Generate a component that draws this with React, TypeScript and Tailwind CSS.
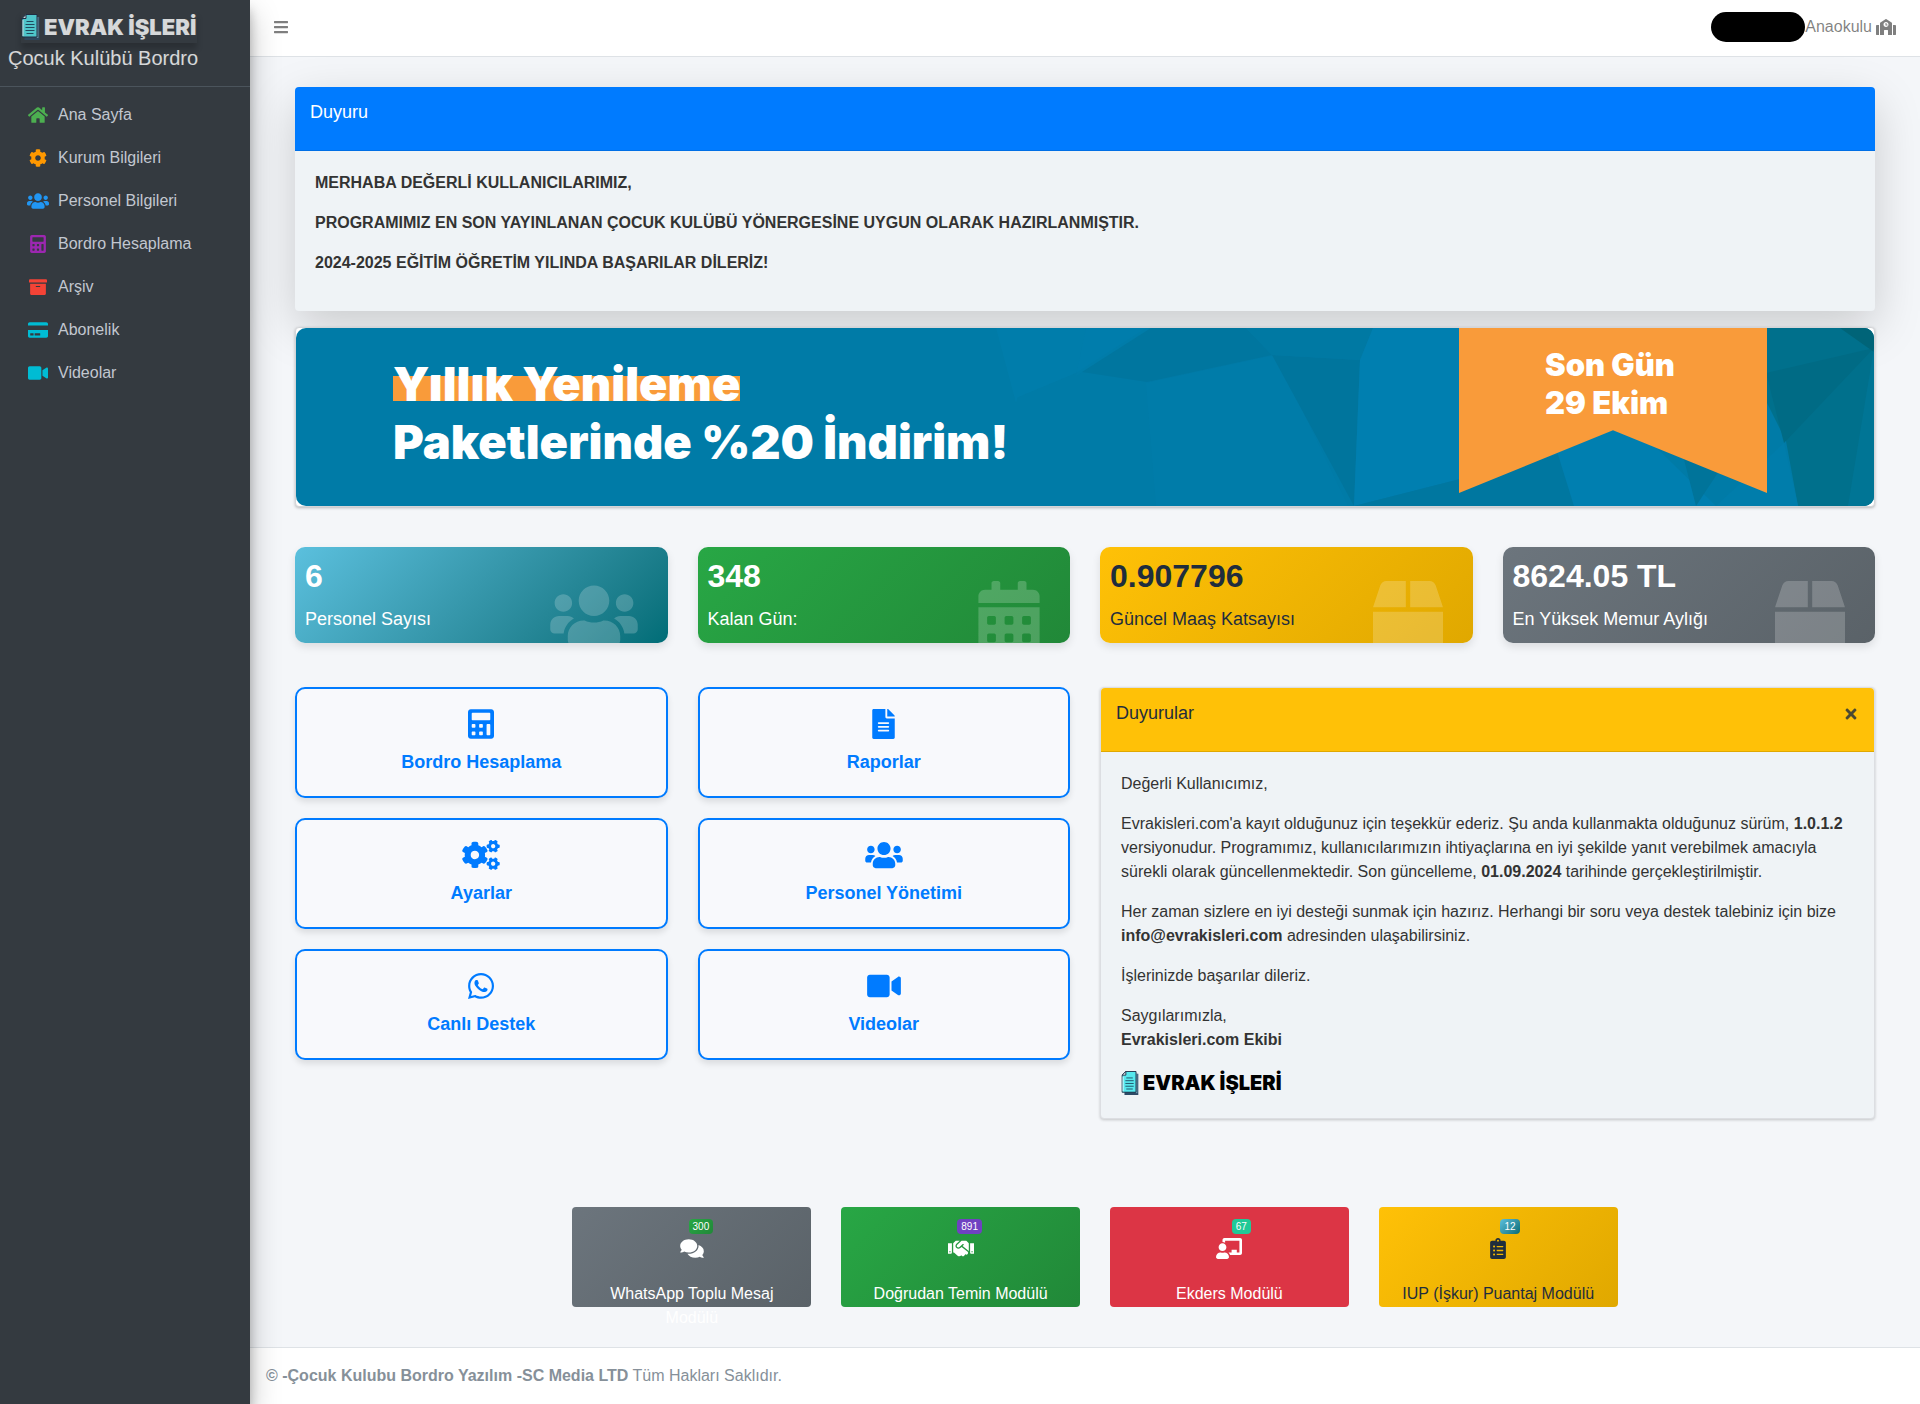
import { ReactNode } from "react"
import {
  FaArchive,
  FaBars,
  FaBox,
  FaCalculator,
  FaCalendarAlt,
  FaChalkboardTeacher,
  FaClipboardList,
  FaCog,
  FaCogs,
  FaComments,
  FaCreditCard,
  FaFileAlt,
  FaHandshake,
  FaHome,
  FaSchool,
  FaTimes,
  FaUsers,
  FaVideo,
  FaWhatsapp,
} from "react-icons/fa"

const menu = [
  { label: "Ana Sayfa", icon: <FaHome className="h-[18px] w-5" />, color: "text-[#4caf50]" },
  { label: "Kurum Bilgileri", icon: <FaCog className="h-[18px] w-[18px]" />, color: "text-[#ff9800]" },
  { label: "Personel Bilgileri", icon: <FaUsers className="h-[18px] w-[22px]" />, color: "text-[#2196f3]" },
  { label: "Bordro Hesaplama", icon: <FaCalculator className="h-[18px] w-4" />, color: "text-[#9c27b0]" },
  { label: "Arşiv", icon: <FaArchive className="h-[18px] w-[18px]" />, color: "text-[#f44336]" },
  { label: "Abonelik", icon: <FaCreditCard className="h-[18px] w-5" />, color: "text-[#00bcd4]" },
  { label: "Videolar", icon: <FaVideo className="h-[18px] w-5" />, color: "text-[#00bcd4]" },
]

const stats = [
  { value: "6", label: "Personel Sayısı", icon: <FaUsers className="h-[70px] w-[88px]" />, style: "text-white from-[#5bc0de] to-[#006d77]" },
  { value: "348", label: "Kalan Gün:", icon: <FaCalendarAlt className="h-[70px] w-[62px]" />, style: "text-white from-[#28a745] to-[#218838]" },
  { value: "0.907796", label: "Güncel Maaş Katsayısı", icon: <FaBox className="h-[70px] w-[70px]" />, style: "text-[#1f2d3d] from-[#ffc107] to-[#e0a800]" },
  { value: "8624.05 TL", label: "En Yüksek Memur Aylığı", icon: <FaBox className="h-[70px] w-[70px]" />, style: "text-white from-[#6c757d] to-[#5a6268]" },
]

const shortcuts = [
  { label: "Bordro Hesaplama", icon: <FaCalculator className="h-[30px] w-[26px]" /> },
  { label: "Raporlar", icon: <FaFileAlt className="h-[30px] w-[23px]" /> },
  { label: "Ayarlar", icon: <FaCogs className="h-[30px] w-[38px]" /> },
  { label: "Personel Yönetimi", icon: <FaUsers className="h-[30px] w-[38px]" /> },
  { label: "Canlı Destek", icon: <FaWhatsapp className="h-[30px] w-[26px]" /> },
  { label: "Videolar", icon: <FaVideo className="h-[30px] w-[34px]" /> },
]

const modules = [
  {
    label: "WhatsApp Toplu Mesaj Modülü",
    count: 300,
    icon: <FaComments className="h-[21px] w-6 shrink-0" />,
    style: "text-white bg-linear-135 from-[#6c757d] to-[#5a6268]",
    badge: "bg-linear-135 from-[#28a745] to-[#218838]",
  },
  {
    label: "Doğrudan Temin Modülü",
    count: 891,
    icon: <FaHandshake className="h-[21px] w-[26px] shrink-0" />,
    style: "text-white bg-linear-135 from-[#28a745] to-[#218838]",
    badge: "bg-[#6f42c1]",
  },
  {
    label: "Ekders Modülü",
    count: 67,
    icon: <FaChalkboardTeacher className="h-[21px] w-[26px] shrink-0" />,
    style: "text-white bg-[#dc3545]",
    badge: "bg-[#20c997]",
  },
  {
    label: "IUP (İşkur) Puantaj Modülü",
    count: 12,
    icon: <FaClipboardList className="h-[21px] w-4 shrink-0" />,
    style: "text-[#1f2d3d] bg-linear-135 from-[#ffc107] to-[#e0a800]",
    badge: "bg-linear-135 from-[#5bc0de] to-[#006d77]",
  },
]

function DocumentIcon({ className }: { className: string }) {
  return (
    <svg viewBox="0 0 18 26" className={className} aria-hidden="true">
      <path d="M3 3h15v23H3z" fill="#2d4a66" />
      <path d="M15 3h2v21h-2z" fill="#6f9fb4" />
      <path d="M4.500 .5h11v22.500h-15V4.500z" fill="#56e8ee" stroke="#1d2b44" />
      <path d="M.5 4.500h4v-4z" fill="#f2fbff" stroke="#1d2b44" />
      <path d="M1.500 6v16" stroke="#e6fbff" />
      <path d="M5 7.500h7M4 10.500h9M4 13.500h9M4 16.500h9M5 19.500h7" stroke="#1d4f66" />
    </svg>
  )
}

function Card({ children, className }: { children: ReactNode, className: string }) {
  return <section className={`rounded bg-[#eff3f6] ${className}`}>{children}</section>
}

function Sidebar() {
  return (
    <aside className="relative z-10 w-[250px] shrink-0 bg-[#343a40] shadow-[0_14px_28px_rgba(0,0,0,0.25),0_10px_10px_rgba(0,0,0,0.22)]">
      <a href="#" className="block h-[87px] border-b border-[#4b545c] px-2 pt-[11px] text-white/80">
        <span className="ml-[13px] flex h-8 w-fit items-center gap-1 pr-px shadow-[0_6px_6px_rgba(0,0,0,0.2)]">
          <DocumentIcon className="h-[26px] w-[19px] opacity-80" />
          <span className="font-[Inter] text-[22px] font-black">EVRAK İŞLERİ</span>
        </span>
        <span className="block text-xl leading-[30px]">Çocuk Kulübü Bordro</span>
      </a>
      <nav className="flex flex-col gap-[3px] pt-2">
        {menu.map((item) => (
          <a key={item.label} href="#" className="flex h-10 items-center gap-[7px] pl-[25px] text-[#c2c7d0]">
            <span className={`flex w-[26px] justify-center ${item.color}`}>{item.icon}</span>
            {item.label}
          </a>
        ))}
      </nav>
    </aside>
  )
}

function Banner() {
  return (
    <div className="mt-4 rounded border border-[#d3d5d8] bg-white shadow-[0_1px_3px_rgba(0,0,0,0.25)]">
      <div className="relative flex h-[178px] justify-between overflow-hidden rounded-[10px] bg-[#007ba7] text-white">
        <svg viewBox="0 0 1578 178" preserveAspectRatio="none" className="absolute size-full" aria-hidden="true">
          <path d="M700 0h40l-20 75zM740 0h110l-70 45-60 25z" fill="#007eae" opacity=".6" />
          <path d="M790 0h65L780 48zM850 55L980 27l72 151H860z" fill="#007faf" opacity=".35" />
          <path d="M855 0h95l26 27-125 27-65-10z" fill="#00769f" />
          <path d="M976 27l88 5-6 146z" fill="#00759d" />
          <path d="M950 0h127l-13 32-88-5z" fill="#0079a3" />
          <path d="M1077 0h91v150l-110 28 6-146z" fill="#007fb0" />
          <path d="M1058 178l110-28 100-25 12 53z" fill="#0077a0" />
          <path d="M1260 120l70-30 90 88h-142z" fill="#007fb0" />
          <path d="M1385 120l40 20-25 38z" fill="#00749a" />
          <path d="M1470 0h108v178h-76l-12-65-20-40z" fill="#00708c" />
          <path d="M1470 45L1578 20l-90 95z" fill="#006b85" />
          <path d="M1544 0h34v24z" fill="#006478" />
          <path d="M1578 20v158h-26z" fill="#007595" />
          <path d="M1488 115l-68 63h82z" fill="#007dab" />
        </svg>
        <div className="relative pt-[27px] pl-[97px] font-[Inter] text-[47px] leading-[58px] font-black">
          <p className="relative w-fit">
            <span className="absolute top-[21px] h-[25px] w-full bg-[#f99b3a]" />
            <span className="relative">Yıllık Yenileme</span>
          </p>
          <p>Paketlerinde %20 İndirim!</p>
        </div>
        <p className="relative mr-[107px] h-[165px] w-[308px] bg-[#f99b3a] pt-[18px] pl-[86px] font-[Inter] text-[31px] leading-[38px] font-black [clip-path:polygon(0_0,100%_0,100%_100%,50%_62%,0_100%)]">
          Son Gün
          <br />
          29 Ekim
        </p>
      </div>
    </div>
  )
}

export default function App() {
  return (
    <div className="flex min-h-screen bg-[#f4f6f9] font-['Liberation_Sans',Arial,sans-serif] text-base text-[#212529]">
      <Sidebar />
      <div className="flex min-w-0 flex-1 flex-col">
        <header className="flex h-[57px] items-center justify-between border-b border-[#dee2e6] bg-white px-6 text-black/50">
          <button type="button" aria-label="Menü" className="pb-[3px]">
            <FaBars className="h-4 w-[14px]" />
          </button>
          <a href="#" className="flex items-center pb-[3px]">
            <span className="h-[30px] w-[94px] rounded-full bg-black" />
            Anaokulu
            <FaSchool className="ml-1 h-4 w-5" />
          </a>
        </header>

        <main className="flex-1 px-[45px] pt-[30px] pb-10">
          <Card className="shadow-[0_16px_48px_rgba(0,0,0,0.175)]">
            <h2 className="h-16 rounded-t border-b border-[#006fe6] bg-[#007bff] px-[15px] pt-3 text-lg leading-[26px] text-white">Duyuru</h2>
            <div className="space-y-4 p-5 pb-9 font-bold text-[#333]">
              <p>MERHABA DEĞERLİ KULLANICILARIMIZ,</p>
              <p>PROGRAMIMIZ EN SON YAYINLANAN ÇOCUK KULÜBÜ YÖNERGESİNE UYGUN OLARAK HAZIRLANMIŞTIR.</p>
              <p>2024-2025 EĞİTİM ÖĞRETİM YILINDA BAŞARILAR DİLERİZ!</p>
            </div>
          </Card>

          <Banner />

          <div className="mt-10 grid grid-cols-4 gap-[30px]">
            {stats.map((stat) => (
              <div key={stat.label} className={`relative h-24 overflow-hidden rounded-[10px] bg-linear-135 p-[10px] shadow-[0_4px_8px_rgba(0,0,0,0.1)] ${stat.style}`}>
                <div className="absolute top-[34px] right-[30px] text-white/20">{stat.icon}</div>
                <p className="relative text-[32px] leading-[38px] font-bold">{stat.value}</p>
                <p className="relative mt-[10px] text-lg leading-7">{stat.label}</p>
              </div>
            ))}
          </div>

          <div className="mt-11 grid grid-cols-2 items-start gap-[30px]">
            <div className="grid grid-cols-2 gap-x-[30px] gap-y-5">
              {shortcuts.map((item) => (
                <a
                  key={item.label}
                  href="#"
                  className="flex flex-col items-center gap-[10px] rounded-[10px] border-2 border-[#007bff] bg-[#f8f9fc] p-5 text-lg leading-[27px] font-bold text-[#007bff] shadow-[0_4px_6px_rgba(0,0,0,0.1)]"
                >
                  {item.icon}
                  {item.label}
                </a>
              ))}
            </div>

            <Card className="border border-[#dcdee2] shadow-[0_1px_3px_rgba(0,0,0,0.2)]">
              <div className="flex h-16 items-start justify-between rounded-t border-b border-[#e0a800] bg-[#ffc107] px-[15px] pt-3 text-[#1f2d3d]">
                <h2 className="text-lg leading-[26px]">Duyurular</h2>
                <button type="button" aria-label="Kapat" className="pt-[6px] opacity-80">
                  <FaTimes size={16} />
                </button>
              </div>
              <div className="space-y-4 p-5 text-[#333]">
                <p>Değerli Kullanıcımız,</p>
                <p>
                  Evrakisleri.com'a kayıt olduğunuz için teşekkür ederiz. Şu anda kullanmakta olduğunuz sürüm, <b>1.0.1.2</b>{" "}
                  versiyonudur. Programımız, kullanıcılarımızın ihtiyaçlarına en iyi şekilde yanıt verebilmek amacıyla sürekli
                  olarak güncellenmektedir. Son güncelleme, <b>01.09.2024</b> tarihinde gerçekleştirilmiştir.
                </p>
                <p>
                  Her zaman sizlere en iyi desteği sunmak için hazırız. Herhangi bir soru veya destek talebiniz için bize{" "}
                  <b>info@evrakisleri.com</b> adresinden ulaşabilirsiniz.
                </p>
                <p>İşlerinizde başarılar dileriz.</p>
                <p>
                  Saygılarımızla,
                  <br />
                  <b>Evrakisleri.com Ekibi</b>
                </p>
                <div className="flex h-[30px] items-center gap-1 text-black">
                  <DocumentIcon className="h-6 w-[18px]" />
                  <span className="font-[Inter] text-xl font-black">EVRAK İŞLERİ</span>
                </div>
              </div>
            </Card>
          </div>

          <div className="mt-[88px] pl-5">
            <div className="mx-auto grid w-[67%] grid-cols-4 gap-[30px]">
              {modules.map((item) => (
                <a key={item.label} href="#" className={`relative flex h-[100px] flex-col items-center gap-[23px] rounded px-4 pt-[31px] text-center ${item.style}`}>
                  {item.icon}
                  <span className={`absolute top-3 right-[98px] rounded px-1 text-[10px] leading-[15px] text-white ${item.badge}`}>{item.count}</span>
                  <span>{item.label}</span>
                </a>
              ))}
            </div>
          </div>
        </main>

        <footer className="border-t border-[#dee2e6] bg-white p-4 text-[#869099]">
          <b>© -Çocuk Kulubu Bordro Yazılım -SC Media LTD</b> Tüm Hakları Saklıdır.
        </footer>
      </div>
    </div>
  )
}
